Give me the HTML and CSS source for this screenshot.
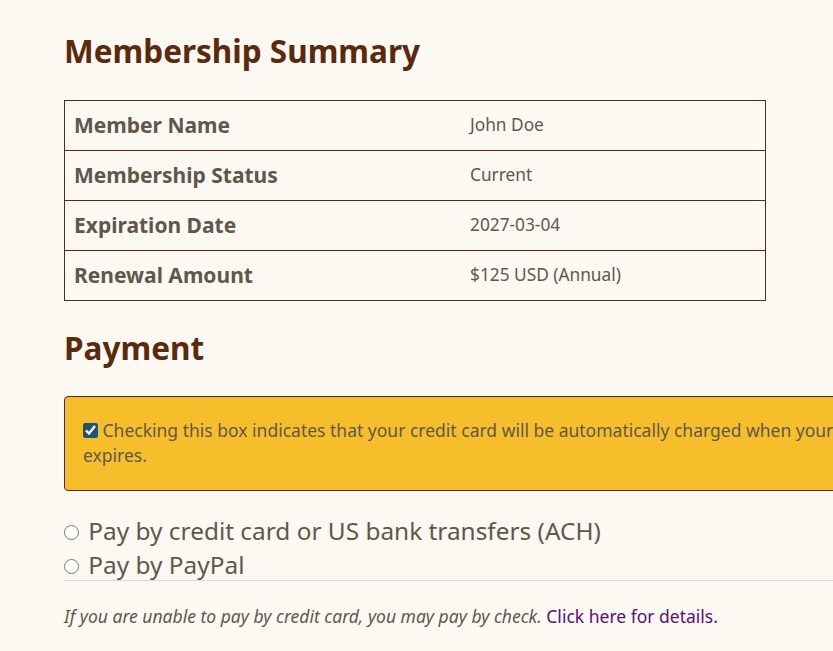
FILE: index.html
```html
<!DOCTYPE html>
<html lang="en">
  <head>
    <meta charset="UTF-8" />
    <meta name="viewport" content="width=device-width, initial-scale=1.0" />
    <title>Membership Renewal</title>
    <link rel="stylesheet" href="styles.css">
  </head>
  <body>
    <div class="page">
      <h1>Membership Summary</h1>
      <table class="summary">
        <tr>
          <th>Member Name</th>
          <td>John Doe</td>
        </tr>
        <tr>
          <th>Membership Status</th>
          <td>Current</td>
        </tr>
        <tr>
          <th>Expiration Date</th>
          <td>2027-03-04</td>
        </tr>
        <tr>
          <th>Renewal Amount</th>
          <td>$125 USD (Annual)</td>
        </tr>
      </table>

      <h1 class="payment-title">Payment</h1>
      <div class="autorenew">
        <label>
          <input type="checkbox" checked />
          Checking this box indicates that your credit card will be automatically charged when your membership expires.
        </label>
      </div>

      <div class="pay-options">
        <label class="pay-option">
          <input type="radio" name="method" value="card" />
          Pay by credit card or US bank transfers (ACH)
        </label>
        <label class="pay-option">
          <input type="radio" name="method" value="paypal" />
          Pay by PayPal
        </label>
      </div>

      <p class="check-note">
        <em>If you are unable to pay by credit card, you may pay by check.</em>
        <a href="#">Click here for details.</a>
      </p>
    </div>
  </body>
</html>
```

FILE: styles.css
```css
html, body {
  margin: 0;
  padding: 0;
}

body {
  font-family: "Noto Sans", "Open Sans", Arial, sans-serif;
  background-color: #fcf9f2;
  color: #5f584a;
  overflow: hidden;
}

.page {
  width: 940px;
  padding: 28px 0 0 64px;
}

h1 {
  color: #5a2a0e;
  font-size: 31.5px;
  font-weight: bold;
  margin: 0 0 26px 0;
  line-height: 46px;
}

.payment-title {
  margin-bottom: 25px;
}

.summary {
  width: 702px;
  border-collapse: collapse;
  margin-bottom: 24px;
}

.summary th,
.summary td {
  border: 1px solid #5a2a0e;
  height: 47px;
  padding: 0 9px 2px 9px;
  text-align: left;
  vertical-align: middle;
}

.summary th {
  width: 378px;
  font-size: 21px;
  font-weight: bold;
  border-right: none;
}

.summary td {
  font-size: 17.3px;
  border-left: none;
}

.autorenew {
  background-color: #f7be2c;
  border: 1px solid #5a2a0e;
  border-radius: 4px;
  padding: 21px 18px 22px 18px;
  font-size: 17.5px;
  line-height: 25px;
}

.autorenew input {
  width: 15px;
  height: 15px;
  margin: 0;
  vertical-align: -1px;
  accent-color: #1f5572;
}

.pay-options {
  margin-top: 22px;
  border-bottom: 1px solid #cfdde3;
}

.pay-option {
  display: block;
  font-size: 24.4px;
  line-height: 35px;
}

.pay-option:last-child {
  line-height: 32px;
  padding-top: 1px;
  margin-bottom: -1px;
}

.pay-option input {
  width: 15px;
  height: 15px;
  margin: 0 3px 0 0;
  vertical-align: 0;
}

.check-note {
  margin: 23px 0 0 0;
  font-size: 17.5px;
}

.check-note em {
  font-style: italic;
}

a {
  color: #5a0f7a;
  text-decoration: none;
}
```
